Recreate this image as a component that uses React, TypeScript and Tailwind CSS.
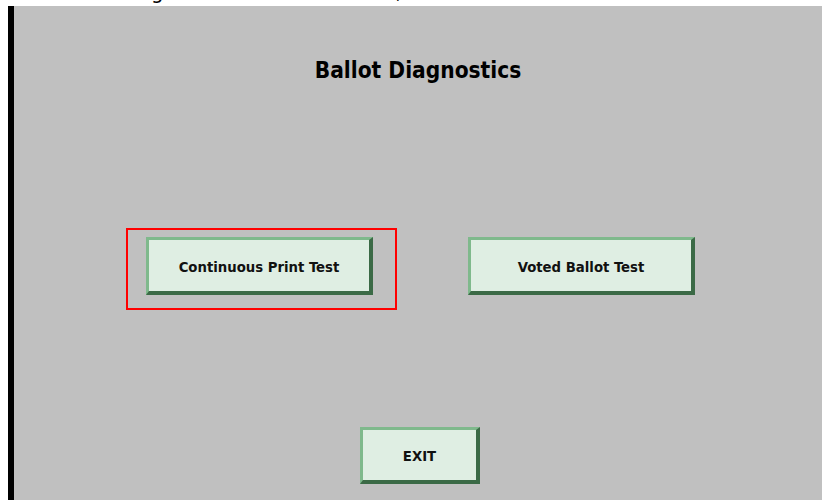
import React from "react";

function PanelButton({ label, className = "" }: { label: string; className?: string }) {
  return (
    <button
      className={
        "flex items-center justify-center pt-[3px] bg-[#dfeee3] border-t-[3px] border-l-[3px] border-r-[4px] border-b-[4px] border-t-[#7fb98c] border-l-[#7fb98c] border-r-[#3b6a46] border-b-[#3b6a46] text-[14.75px] font-bold text-[#111] " +
        className
      }
    >
      {label}
    </button>
  );
}

export default function App() {
  return (
    <div className="w-[822px] h-[500px] bg-white flex flex-col overflow-hidden font-['DejaVu_Sans_Condensed','DejaVu_Sans',sans-serif]">
      {/* clipped line above the panel */}
      <div className="h-[6px] overflow-hidden">
        <div className="flex text-[22px] leading-[22px] -mt-[19px] text-black">
          <span className="ml-[151px]">g</span>
          <span className="ml-[232px]">,</span>
        </div>
      </div>

      <div className="flex-1 flex">
        <div className="w-[8px] bg-white" />
        <div className="w-[6px] bg-black" />
        <div className="flex-1 bg-[#c0c0c0] flex flex-col">
          <h1 className="pt-[52px] text-center text-[22.5px] leading-[24px] font-bold text-black">Ballot Diagnostics</h1>

          <div className="mt-[146px] flex items-start pl-[112px]">
            <div className="w-[271px] h-[82px] border-2 border-[#ff0000] pt-[7px] pl-[18px]">
              <PanelButton label="Continuous Print Test" className="w-[227px] h-[58px]" />
            </div>
            <PanelButton label="Voted Ballot Test" className="ml-[71px] mt-[9px] w-[227px] h-[58px]" />
          </div>

          <div className="mt-[117px] pl-[346px]">
            <PanelButton label="EXIT" className="w-[120px] h-[57px]" />
          </div>
        </div>
      </div>
    </div>
  );
}
